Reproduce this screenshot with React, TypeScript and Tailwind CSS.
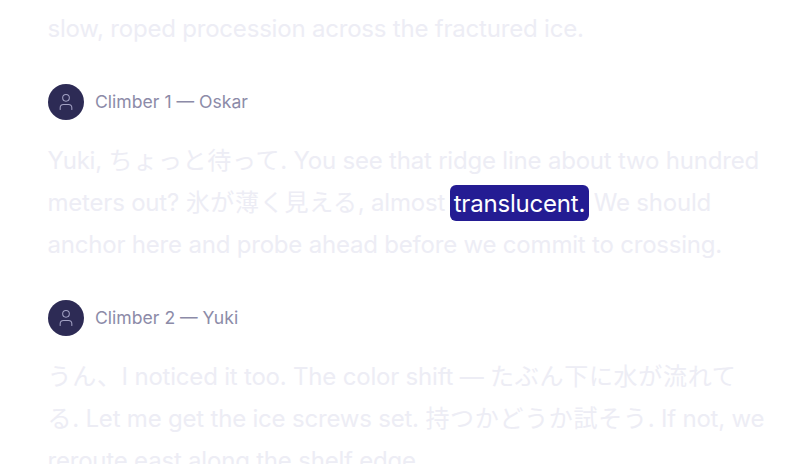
import type { ReactNode } from 'react';
import { User } from 'lucide-react';

function SpeakerRow({ name }: { name: string }) {
  return (
    <div className="flex items-center gap-[11.5px]">
      <div className="w-9 h-9 rounded-full bg-[#2d2b55] flex items-center justify-center">
        <User className="w-5 h-5 text-[#a3a2c4]" strokeWidth={1.25} />
      </div>
      <span className="text-[17.6px] tracking-normal text-[#8c8ba8]">{name}</span>
    </div>
  );
}

// japanese runs sit slightly wider than the latin text around them
function Ja({ children }: { children: ReactNode }) {
  return <span className="tracking-[0.7px]">{children}</span>;
}

export default function App() {
  return (
    <div className="h-[464px] w-[812px] overflow-hidden bg-white font-['Inter','Noto_Sans_CJK_JP',sans-serif]">
      <div className="pl-[47.5px] pr-[47px] -mt-[34px] text-[24px] leading-[42px] tracking-[-0.2px] text-[#ededf5]">
        <p className="mb-[31px]">
          Now in the foggy low col, the team forms a long
          <br />
          slow, roped procession across the fractured ice.
        </p>

        <SpeakerRow name="Climber 1 — Oskar" />
        <p className="mt-[17px] mb-[31px]">
          Yuki, <Ja>ちょっと待って</Ja>. You see that ridge line about two hundred meters out? <Ja>氷が薄く見える</Ja>, almost{' '}
          <span className="bg-[#241c93] text-white rounded-md px-1 py-[3.5px] -mx-[2px]">translucent.</span> We should anchor here and probe ahead before we commit to crossing.
        </p>

        <SpeakerRow name="Climber 2 — Yuki" />
        <p className="mt-[17px]">
          <Ja>うん、</Ja>I noticed it too. The color shift — <Ja>たぶん下に水が流れてる</Ja>. Let me get the ice screws set. <Ja>持つかどうか試そう</Ja>. If not, we reroute east along the shelf edge.
        </p>
      </div>
    </div>
  );
}
